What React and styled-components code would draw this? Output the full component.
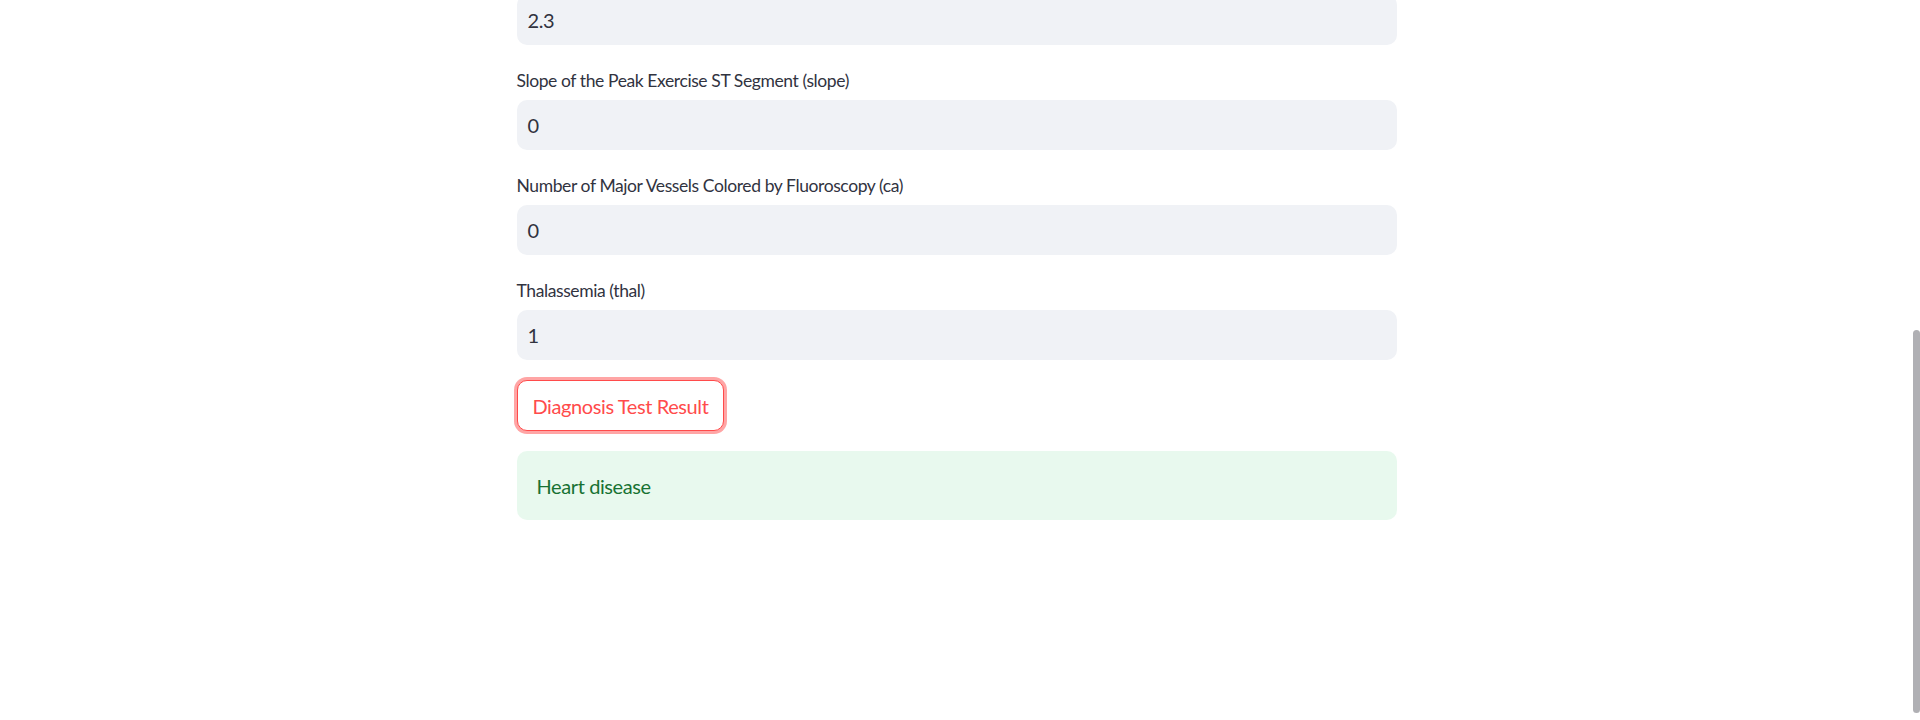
import React from 'react';
import styled, { createGlobalStyle } from 'styled-components';

const GlobalStyle = createGlobalStyle`
    html, body {
        margin: 0;
        padding: 0;
        background: #ffffff;
        overflow: hidden;
    }
    body {
        font-family: "Lato", "Noto Sans", sans-serif;
        letter-spacing: -0.025em;
        color: #31333f;
    }
`;

const Page = styled.div`
    display: flex;
    width: 100%;
    height: 720px;
    overflow: hidden;
`;

const Main = styled.main`
    flex: 1;
    display: flex;
    justify-content: center;
`;

const Block = styled.div`
    width: 880px;
    margin-top: -5px;
    display: flex;
    flex-direction: column;
    gap: 20px;
`;

const Field = styled.div`
    display: flex;
    flex-direction: column;
`;

const Label = styled.label`
    height: 30px;
    margin-bottom: 5px;
    display: flex;
    align-items: center;
    font-size: 17.5px;
    color: #31333f;
`;

const Input = styled.div`
    height: 50px;
    box-sizing: border-box;
    padding: 0 11px;
    display: flex;
    align-items: center;
    background: #f0f2f6;
    border-radius: 10px;
    font-size: 20px;
    color: #31333f;
`;

const Button = styled.button`
    align-self: flex-start;
    height: 51px;
    padding: 0 15px;
    border: 1px solid #ff4b4b;
    border-radius: 10px;
    background: #ffffff;
    color: #ff4b4b;
    font-family: inherit;
    font-size: 20px;
    letter-spacing: inherit;
    box-shadow: 0 0 0 3px rgba(255, 75, 75, 0.5);
    cursor: pointer;
`;

const Alert = styled.div`
    height: 69px;
    box-sizing: border-box;
    padding: 0 20px;
    display: flex;
    align-items: center;
    background: rgba(33, 195, 84, 0.1);
    border-radius: 10px;
    font-size: 20px;
    color: #177233;
`;

const Gutter = styled.div`
    width: 7px;
    display: flex;
    flex-direction: column;
`;

const Thumb = styled.div`
    margin-top: 330px;
    height: 383px;
    background: #b0b0b4;
    border-radius: 4px;
`;

const fields = [
    { label: 'Slope of the Peak Exercise ST Segment (slope)', value: '0' },
    { label: 'Number of Major Vessels Colored by Fluoroscopy (ca)', value: '0' },
    { label: 'Thalassemia (thal)', value: '1' },
];

const App = () => {
    return (
        <>
            <GlobalStyle />
            <Page>
                <Main>
                    <Block>
                        <Input>2.3</Input>
                        {fields.map(f => (
                            <Field key={f.label}>
                                <Label>{f.label}</Label>
                                <Input>{f.value}</Input>
                            </Field>
                        ))}
                        <Button>Diagnosis Test Result</Button>
                        <Alert>Heart disease</Alert>
                    </Block>
                </Main>
                <Gutter>
                    <Thumb />
                </Gutter>
            </Page>
        </>
    );
};

export default App;
